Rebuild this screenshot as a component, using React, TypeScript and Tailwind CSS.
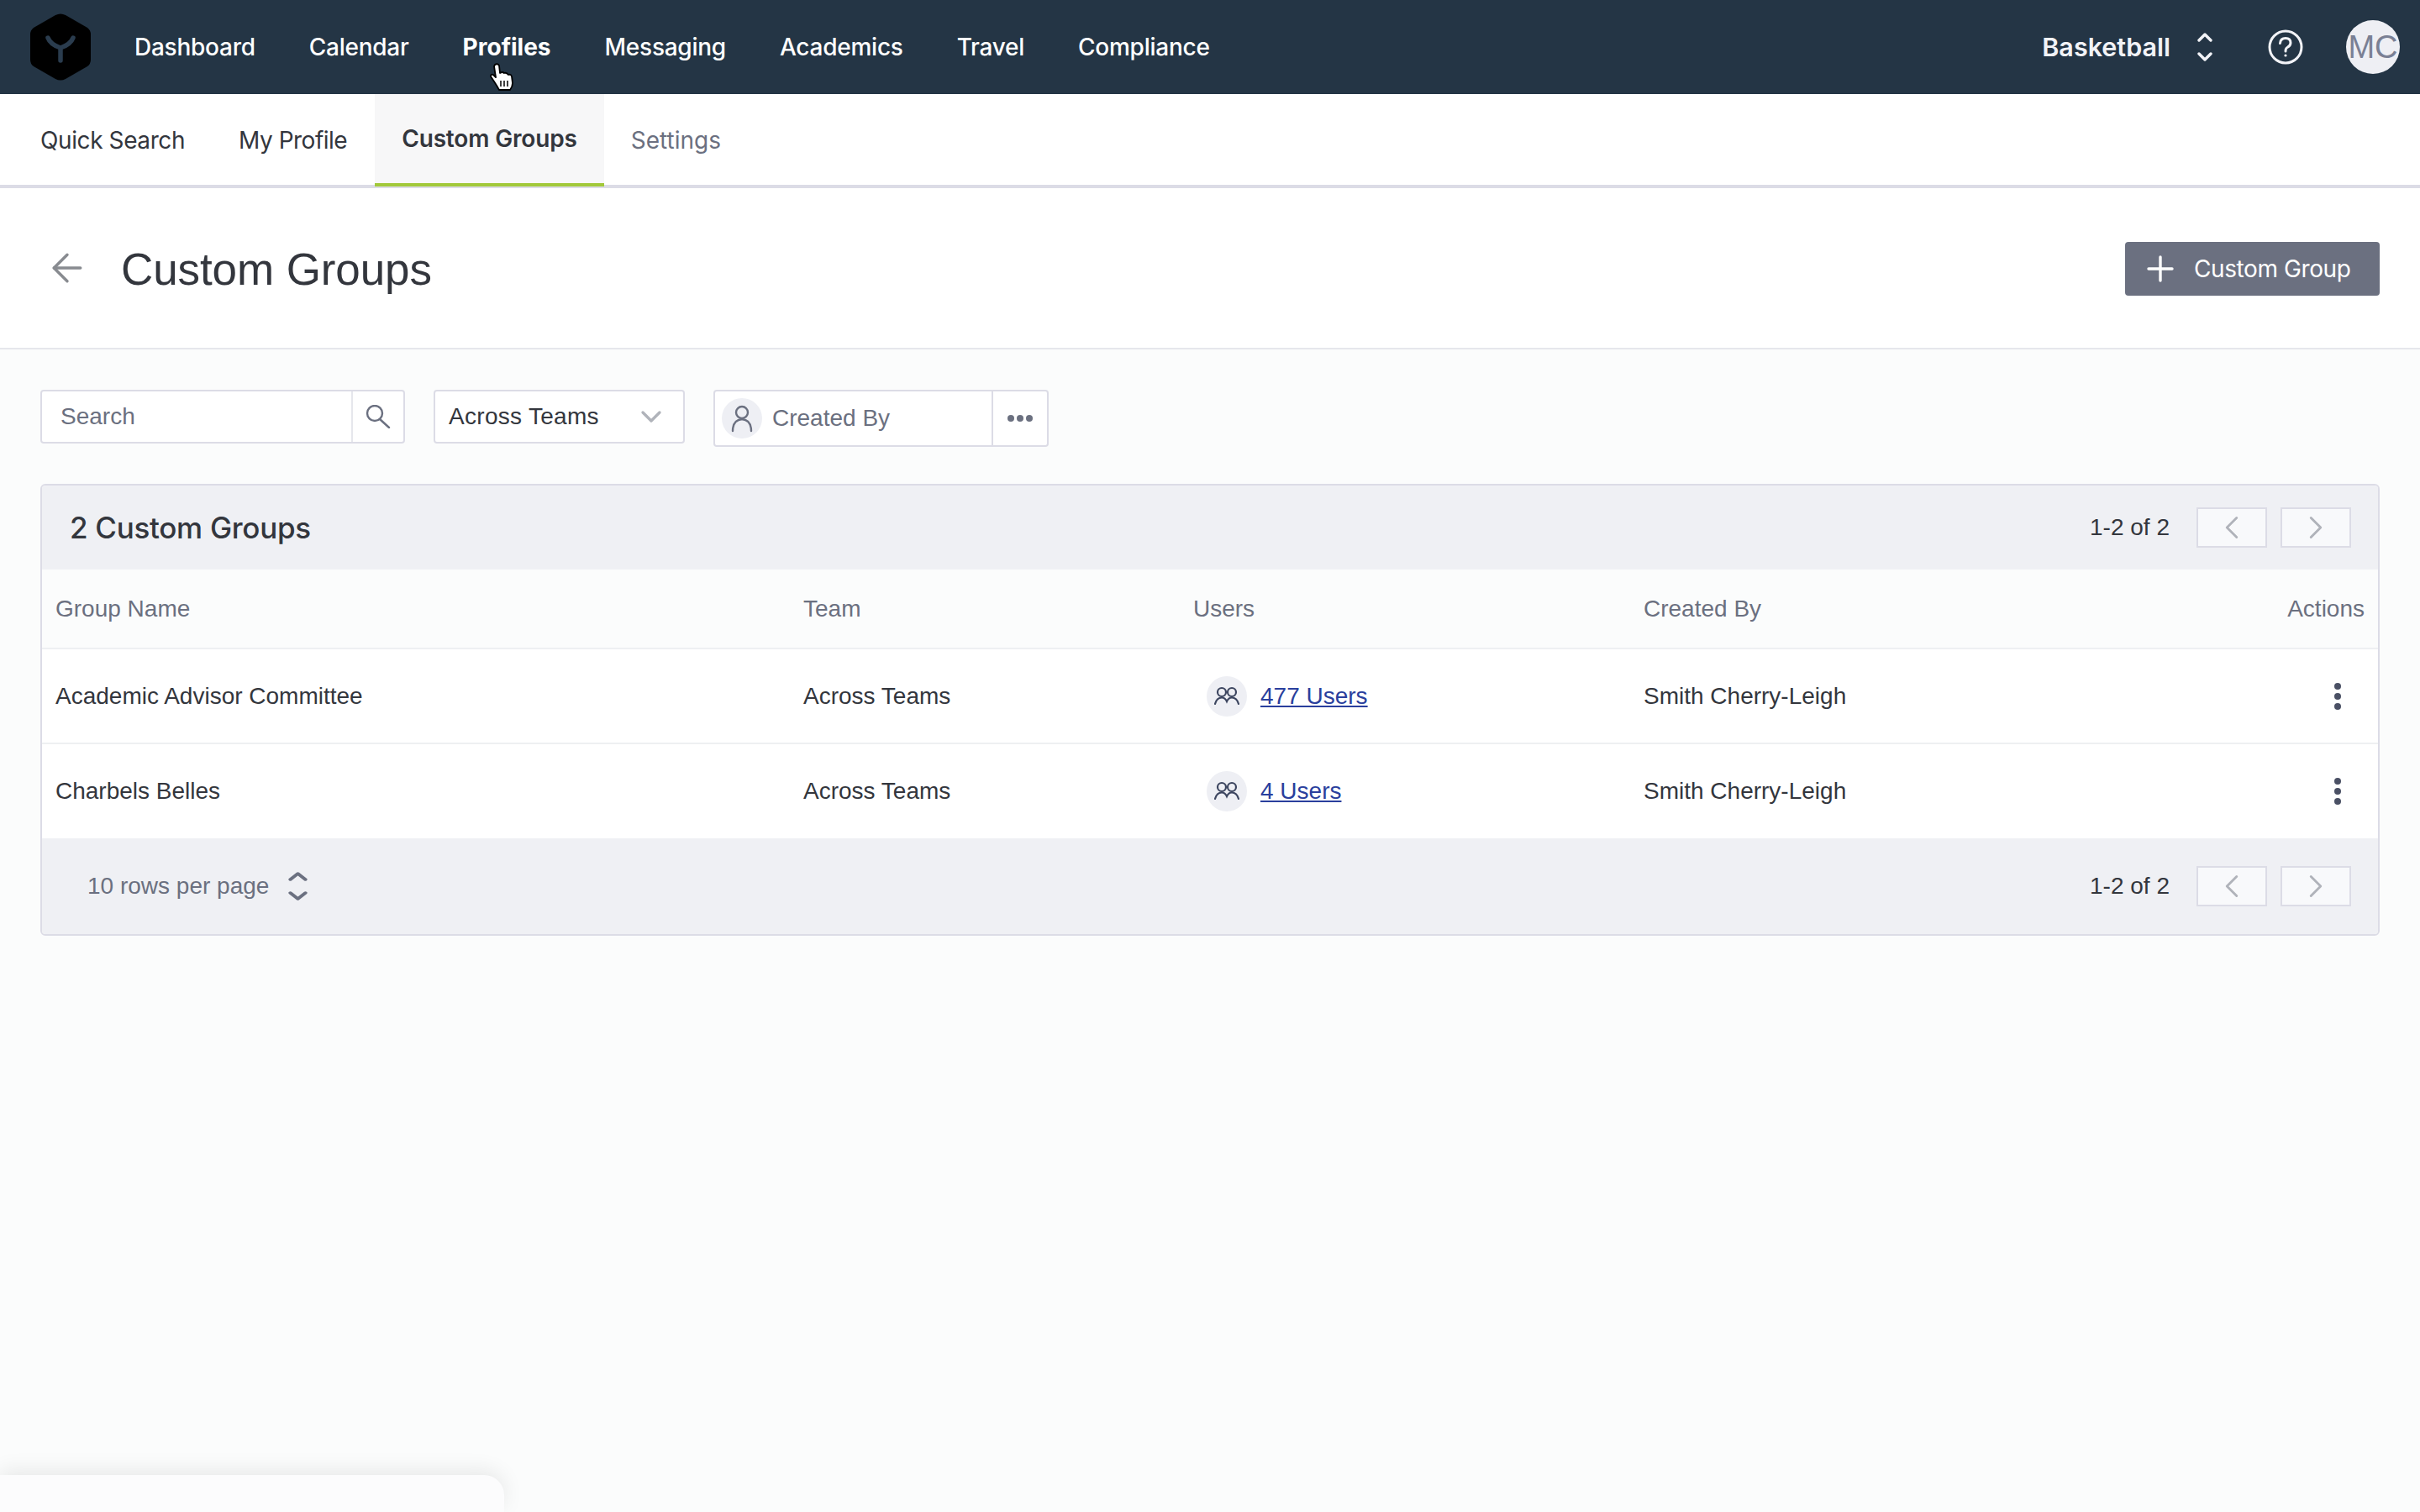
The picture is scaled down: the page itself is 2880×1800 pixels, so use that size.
import { ArrowLeft, ChevronDown, ChevronLeft, ChevronRight, Plus } from 'lucide-react'

const navItems = ['Dashboard', 'Calendar', 'Profiles', 'Messaging', 'Academics', 'Travel', 'Compliance']

const groups = [
  { name: 'Academic Advisor Committee', team: 'Across Teams', users: '477 Users', createdBy: 'Smith Cherry-Leigh' },
  { name: 'Charbels Belles', team: 'Across Teams', users: '4 Users', createdBy: 'Smith Cherry-Leigh' },
]

function Logo() {
  return (
    <svg width="72" height="80" viewBox="0 0 72 80" className="shrink-0">
      <path d="M30 2 L4 17 Q0 20 0 25 L0 55 Q0 60 4 63 L30 78 Q36 81 42 78 L68 63 Q72 60 72 55 L72 25 Q72 20 68 17 L42 2 Q36 -1 30 2 Z" fill="#000" />
      <path d="M21 29 Q24 37 36 41 Q48 37 51 29 M36 41 V56" fill="none" stroke="#2a3c4e" strokeWidth="5.5" strokeLinecap="round" />
    </svg>
  )
}

function UpDown({ color, w, h, stroke }: { color: string; w: number; h: number; stroke: number }) {
  return (
    <svg width={w} height={h} viewBox="0 0 18 36" fill="none" stroke={color} strokeWidth={stroke} strokeLinecap="round" strokeLinejoin="round" preserveAspectRatio="none" className="shrink-0">
      <path d="M2 10 L9 3 L16 10" />
      <path d="M2 26 L9 33 L16 26" />
    </svg>
  )
}

function HandCursor() {
  return (
    <svg width="30" height="34" viewBox="0 0 30 34" className="absolute left-[32px] top-[40px]">
      <path
        d="M6 2 Q9 0 11 3 L12 12 Q15 10 17 12 Q20 11 22 14 Q25 13 26 16 L27 24 Q27 28 24 32 L11 32 Q9 28 5 22 L1 16 Q1 13 4 14 L7 17 L5 4 Z"
        fill="#fff"
        stroke="#000"
        strokeWidth="1.8"
        strokeLinejoin="round"
      />
      <path d="M13 21 V28 M17 21 V28 M21 21 V28" stroke="#000" strokeWidth="1.5" />
    </svg>
  )
}

function TopNav() {
  return (
    <header className="flex h-[112px] shrink-0 items-center bg-[#243545] pl-[36px] pr-[24px] text-white">
      <Logo />
      <nav className="ml-[52px] flex items-center gap-[64px] text-[28px] font-medium tracking-[-0.25px]">
        {navItems.map((item) => (
          <div key={item} className={item === 'Profiles' ? 'relative font-bold tracking-normal' : ''}>
            {item}
            {item === 'Profiles' && <HandCursor />}
          </div>
        ))}
      </nav>
      <div className="ml-auto flex items-center">
        <span className="text-[30.5px] font-semibold text-[#f2f3f7]">Basketball</span>
        <div className="ml-[32px]">
          <UpDown color="#f2f3f7" w={18} h={36} stroke={3.4} />
        </div>
        <svg width="42" height="42" viewBox="0 0 42 42" fill="none" stroke="#f2f3f7" strokeWidth="3" className="ml-[66px]">
          <circle cx="21" cy="21" r="19" />
          <path d="M14.5 16.5 Q15 10.5 21 10.5 Q27 10.5 27 16 Q27 19.5 23 21.5 Q21 22.5 21 26" strokeLinecap="round" />
          <circle cx="21" cy="31" r="1.6" fill="#f2f3f7" stroke="none" />
        </svg>
        <div className="ml-[51px] flex h-[64px] w-[64px] items-center justify-center rounded-full bg-[#eeeff4] font-['Liberation_Sans',sans-serif] text-[38px] text-[#7a8094]">
          MC
        </div>
      </div>
    </header>
  )
}

function SubNav() {
  return (
    <div className="flex h-[112px] shrink-0 border-b-[4px] border-[#dcdce6] bg-white pl-[16px] text-[28px] text-[#33363d]">
      <div className="flex items-center px-[32px] pt-[2px] tracking-[-0.4px]">Quick Search</div>
      <div className="flex items-center px-[32px] pt-[2px] tracking-[-0.5px]">My Profile</div>
      <div className="mb-[-2px] ml-[1px] flex items-center border-b-[4px] border-[#a2c93a] bg-[#f7f7f8] px-[32px] font-semibold tracking-[-0.15px]">Custom Groups</div>
      <div className="flex items-center px-[32px] pt-[2px] text-[#6b7080]">Settings</div>
    </div>
  )
}

function PageTitle() {
  return (
    <div className="flex h-[192px] shrink-0 items-center border-b-2 border-[#e6e7ec] bg-white pl-[53px] pr-[48px]">
      <ArrowLeft size={54} strokeWidth={1.5} color="#888b90" />
      <h1 className="ml-[37px] pt-[4px] font-['Liberation_Sans',sans-serif] text-[53px] font-normal tracking-[-0.1px] text-[#33363d]">Custom Groups</h1>
      <button className="ml-auto mt-[1px] flex h-[64px] w-[303px] items-center rounded-[4px] bg-[#6b7080] pl-[18px] text-[28px] tracking-[-0.4px] text-white">
        <Plus size={48} strokeWidth={1.7} />
        <span className="ml-[16px]">Custom Group</span>
      </button>
    </div>
  )
}

function Filters() {
  return (
    <div className="flex items-start pl-[48px] pt-[48px] font-['Liberation_Sans',sans-serif] text-[28px]">
      <div className="flex h-[64px] w-[434px] rounded-[4px] border-2 border-[#dcdce6] bg-white">
        <div className="flex flex-1 items-center pl-[22px] text-[#6b7080]">Search</div>
        <div className="flex w-[62px] items-center justify-center border-l-2 border-[#e6e7ec]">
          <svg width="30" height="28" viewBox="0 0 30 28" fill="none" stroke="#6b7080" strokeWidth="2.4" strokeLinecap="round">
            <circle cx="11" cy="10" r="9" />
            <path d="M17 17 L28 27" />
          </svg>
        </div>
      </div>
      <div className="ml-[34px] flex h-[64px] w-[299px] items-center rounded-[4px] border-2 border-[#dcdce6] bg-white pl-[16px] pr-[18px] tracking-[0.3px] text-[#33363d]">
        Across Teams
        <ChevronDown size={40} strokeWidth={2} color="#b0b3ba" className="ml-auto" />
      </div>
      <div className="ml-[34px] flex h-[68px] w-[399px] rounded-[4px] border-2 border-[#dcdce6] bg-white">
        <div className="flex flex-1 items-center pl-[8px] text-[#6b7080]">
          <div className="flex h-[48px] w-[48px] items-center justify-center rounded-full bg-[#eeeff4]">
            <svg width="28" height="34" viewBox="0 0 28 34" fill="none" stroke="#6b7080" strokeWidth="2.4">
              <circle cx="14" cy="10" r="7" />
              <path d="M3 32 Q3 19 14 18 Q25 19 25 32" strokeLinecap="round" />
            </svg>
          </div>
          <span className="ml-[12px]">Created By</span>
        </div>
        <div className="flex w-[66px] items-center justify-center gap-[3px] border-l-2 border-[#dcdce6]">
          <span className="h-[8px] w-[8px] rounded-full bg-[#6b7080]" />
          <span className="h-[8px] w-[8px] rounded-full bg-[#6b7080]" />
          <span className="h-[8px] w-[8px] rounded-full bg-[#6b7080]" />
        </div>
      </div>
    </div>
  )
}

function Pager() {
  return (
    <div className="ml-auto flex items-center font-['Liberation_Sans',sans-serif] text-[28px] text-[#33363d]">
      <span>1-2 of 2</span>
      <button className="ml-[32px] flex h-[48px] w-[84px] items-center justify-center border-2 border-[#dcdce6] bg-[#f8f9fb]">
        <ChevronLeft size={46} strokeWidth={1.5} color="#b0b3ba" />
      </button>
      <button className="ml-[16px] flex h-[48px] w-[84px] items-center justify-center border-2 border-[#dcdce6] bg-[#f8f9fb]">
        <ChevronRight size={46} strokeWidth={1.5} color="#b0b3ba" />
      </button>
    </div>
  )
}

function UsersIcon() {
  return (
    <svg width="30" height="24" viewBox="0 0 30 24" fill="none" stroke="#3d4660" strokeWidth="2.2">
      <circle cx="9" cy="7" r="5" />
      <circle cx="21" cy="7" r="5" />
      <path d="M1 21 Q3 13.5 9 13.5 Q13 13.5 15 18 Q17 13.5 21 13.5 Q27 13.5 29 21" strokeLinecap="round" />
    </svg>
  )
}

function GroupsTable() {
  return (
    <div className="mx-[48px] mt-[44px] overflow-hidden rounded-[6px] border-2 border-[#dcdce6] font-['Liberation_Sans',sans-serif]">
      <div className="flex h-[100px] items-center bg-[#eff0f4] pl-[33px] pr-[32px]">
        <h2 className="font-['Inter',sans-serif] text-[35px] font-medium tracking-[-0.3px] text-[#33363d]">2 Custom Groups</h2>
        <Pager />
      </div>
      <div className="flex h-[95px] items-center border-b-2 border-[#eef0f2] bg-[#fbfcfc] px-[16px] text-[28px] text-[#6b7080]">
        <div className="w-[890px]">Group Name</div>
        <div className="w-[464px]">Team</div>
        <div className="w-[536px]">Users</div>
        <div className="flex-1">Created By</div>
        <div>Actions</div>
      </div>
      {groups.map((group, i) => (
        <div key={group.name} className={`flex items-center bg-white pl-[16px] pr-[44px] text-[28px] text-[#33363d] ${i === 0 ? 'h-[113px] border-b-2 border-[#eef0f2]' : 'h-[112px]'}`}>
          <div className="w-[890px]">{group.name}</div>
          <div className="w-[464px]">{group.team}</div>
          <div className="flex w-[536px] items-center pl-[16px]">
            <div className="flex h-[48px] w-[48px] items-center justify-center rounded-full bg-[#eeeff4]">
              <UsersIcon />
            </div>
            <a className="ml-[16px] text-[#2a3f9d] underline">{group.users}</a>
          </div>
          <div className="flex-1">{group.createdBy}</div>
          <div className="flex flex-col gap-[4px]">
            <span className="h-[8px] w-[8px] rounded-full bg-[#4a5064]" />
            <span className="h-[8px] w-[8px] rounded-full bg-[#4a5064]" />
            <span className="h-[8px] w-[8px] rounded-full bg-[#4a5064]" />
          </div>
        </div>
      ))}
      <div className="flex h-[114px] items-center bg-[#eff0f4] pl-[54px] pr-[32px]">
        <span className="text-[28px] text-[#6b7080]">10 rows per page</span>
        <div className="ml-[23px]">
          <UpDown color="#6b7080" w={23} h={36} stroke={3.4} />
        </div>
        <Pager />
      </div>
    </div>
  )
}

export default function App() {
  return (
    <div className="relative flex h-[1800px] w-full flex-col overflow-hidden bg-[#fbfcfc] font-['Inter',sans-serif]">
      <TopNav />
      <SubNav />
      <PageTitle />
      <Filters />
      <GroupsTable />
      <div className="absolute bottom-0 left-0 h-[44px] w-[600px] rounded-tr-[24px] bg-[#fcfcfd] shadow-[0_-6px_24px_rgba(0,0,0,0.08)]" />
    </div>
  )
}
